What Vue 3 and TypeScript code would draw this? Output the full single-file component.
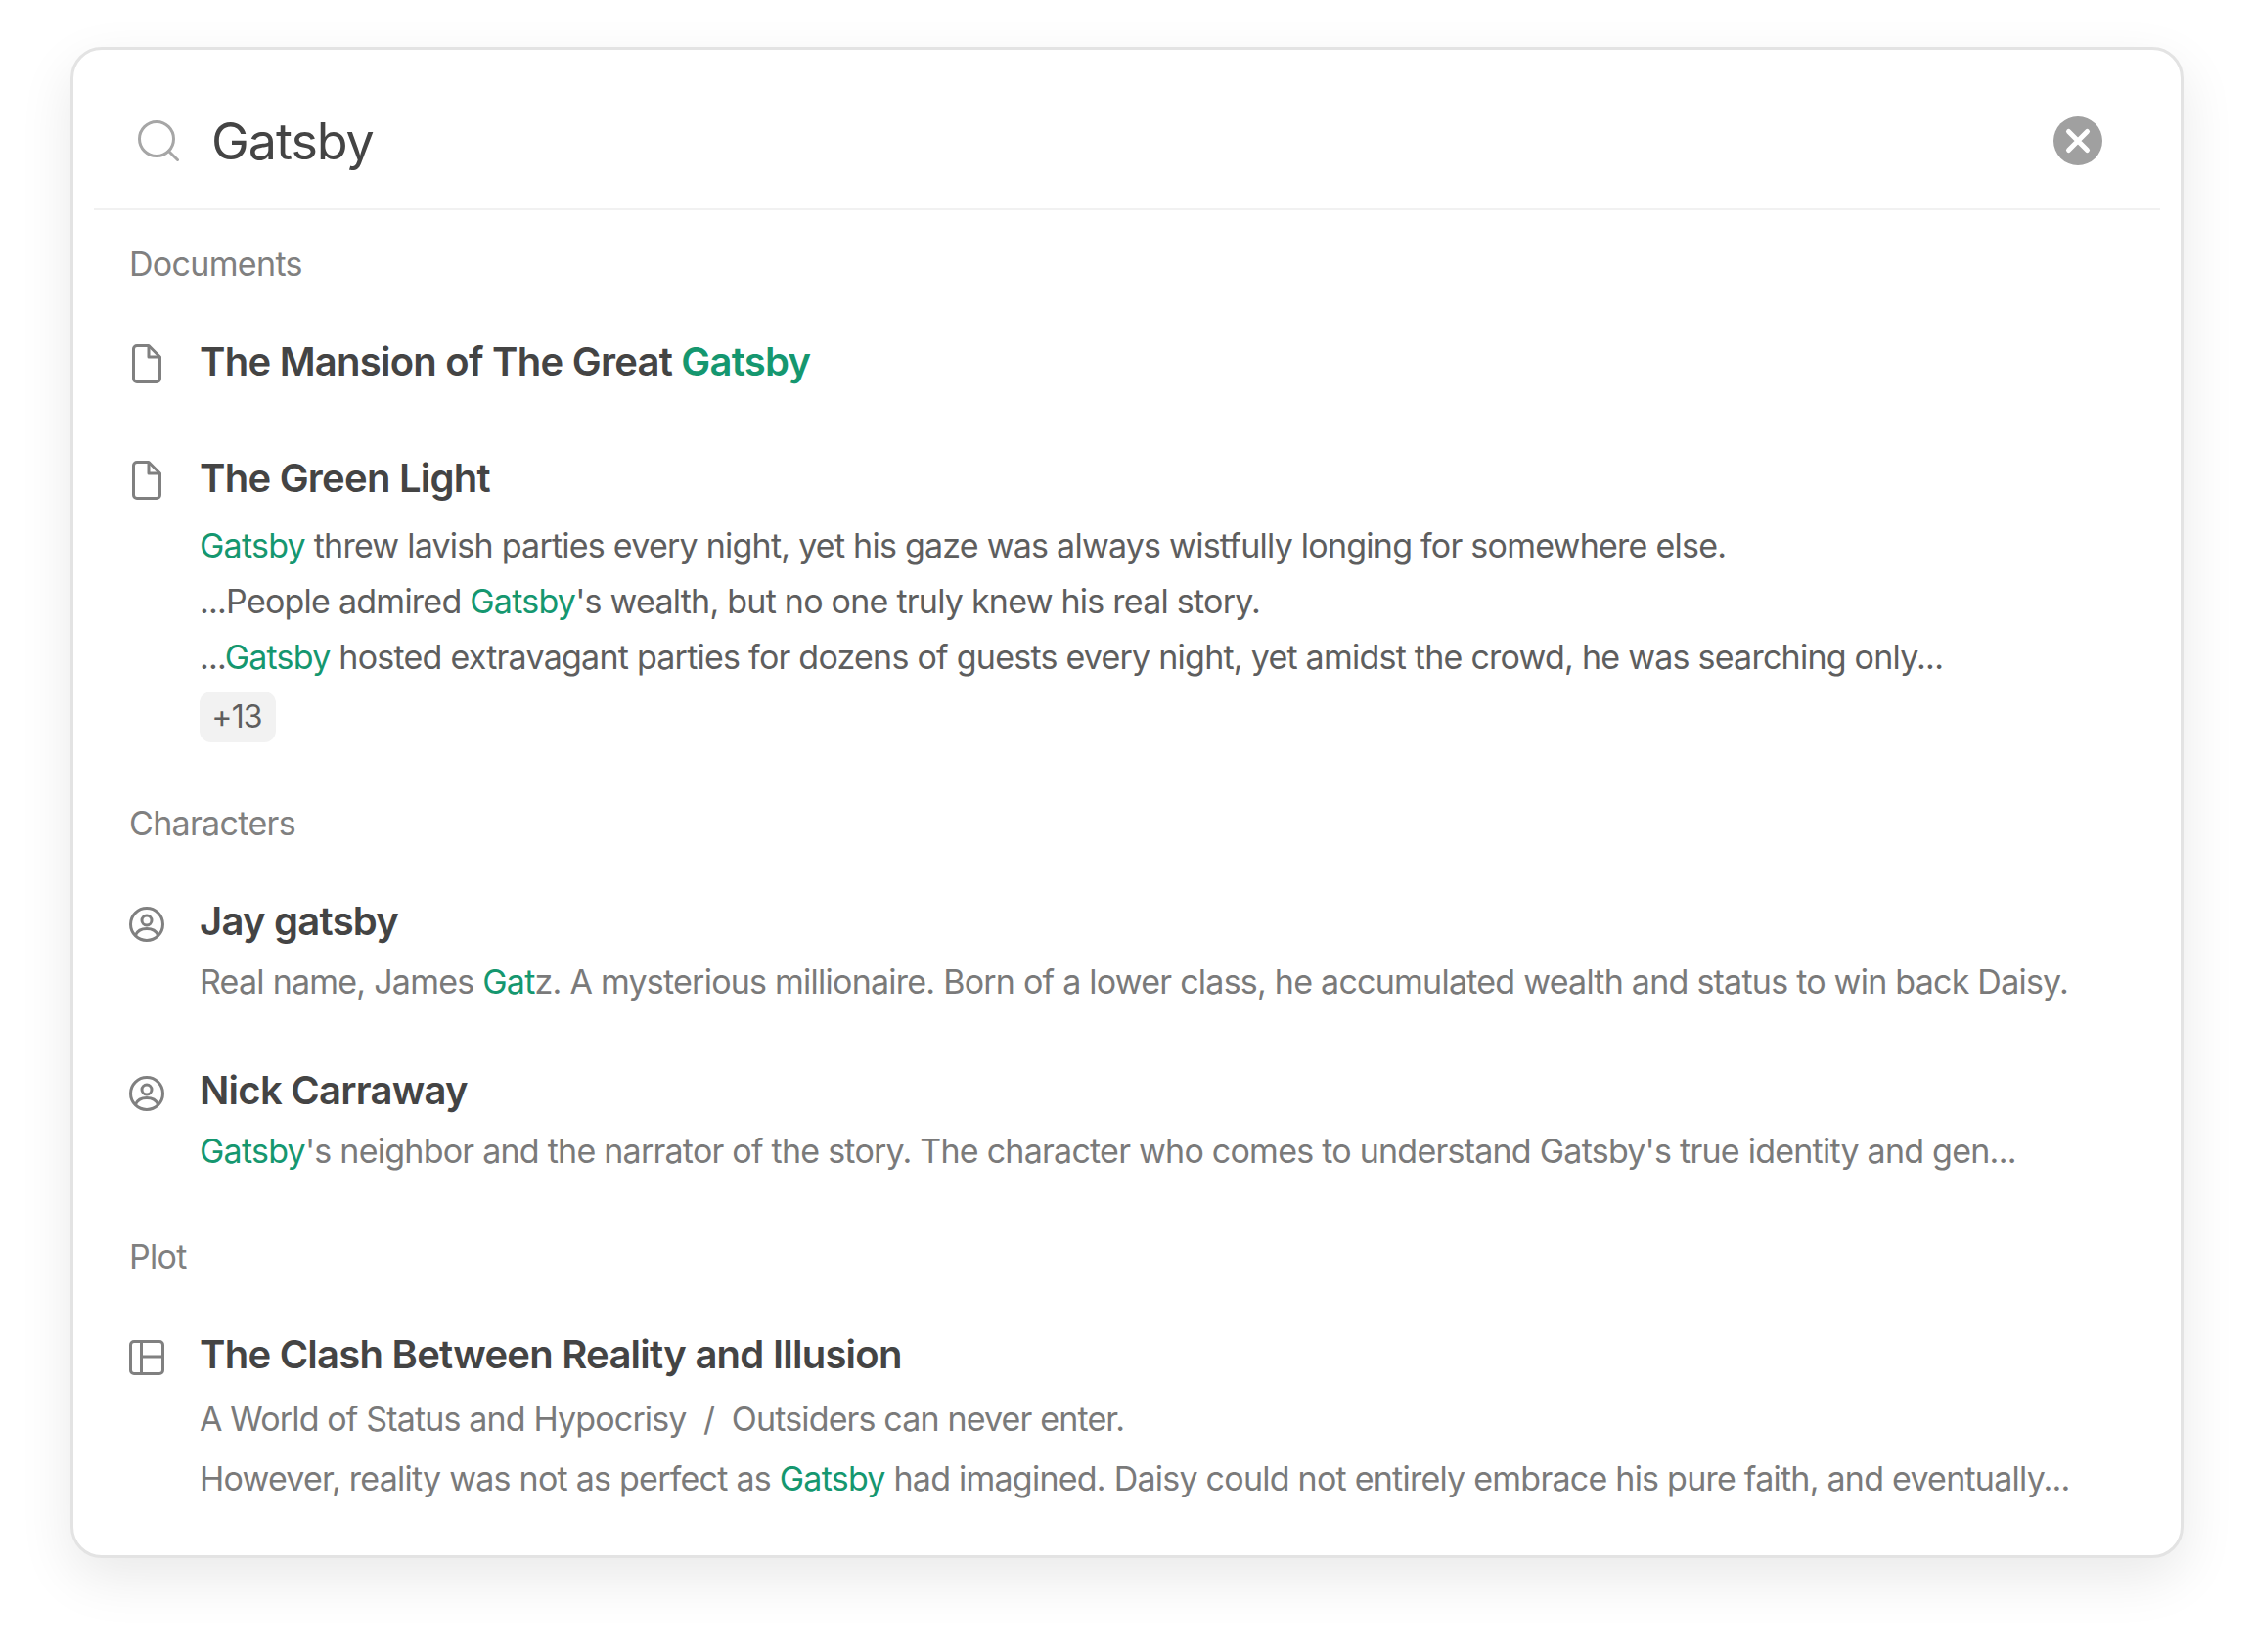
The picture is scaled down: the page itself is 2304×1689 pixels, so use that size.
<script setup lang="ts">
interface Item {
  icon: 'doc' | 'person' | 'plot'
  title: string
  lines: string[]
  more?: string
  dark?: boolean
  sub?: string
}
interface Section {
  label: string
  items: Item[]
}

// [..] marks the matched part of a line
const sections: Section[] = [
  {
    label: 'Documents',
    items: [
      { icon: 'doc', title: 'The Mansion of The Great [Gatsby]', lines: [] },
      {
        icon: 'doc',
        title: 'The Green Light',
        dark: true,
        lines: [
          '[Gatsby] threw lavish parties every night, yet his gaze was always wistfully longing for somewhere else.',
          "...People admired [Gatsby]'s wealth, but no one truly knew his real story.",
          '...[Gatsby] hosted extravagant parties for dozens of guests every night, yet amidst the crowd, he was searching only...',
        ],
        more: '+13',
      },
    ],
  },
  {
    label: 'Characters',
    items: [
      {
        icon: 'person',
        title: 'Jay gatsby',
        lines: ['Real name, James [Gat]z. A mysterious millionaire. Born of a lower class, he accumulated wealth and status to win back Daisy.'],
      },
      {
        icon: 'person',
        title: 'Nick Carraway',
        lines: ["[Gatsby]'s neighbor and the narrator of the story. The character who comes to understand Gatsby's true identity and gen..."],
      },
    ],
  },
  {
    label: 'Plot',
    items: [
      {
        icon: 'plot',
        title: 'The Clash Between Reality and Illusion',
        sub: 'A World of Status and Hypocrisy  /  Outsiders can never enter.',
        lines: ['However, reality was not as perfect as [Gatsby] had imagined. Daisy could not entirely embrace his pure faith, and eventually...'],
      },
    ],
  },
]

const parts = (s: string) =>
  s.split(/(\[[^\]]+\])/).filter(Boolean).map((p) =>
    p[0] === '[' ? { text: p.slice(1, -1), hit: true } : { text: p, hit: false },
  )
</script>

<template>
  <div class="page">
    <div class="card">
      <div class="search">
        <svg width="42" height="42" viewBox="0 0 42 42" fill="none" stroke="#a6a6a6" stroke-width="3">
          <circle cx="19" cy="19" r="17.5" />
          <path d="M31.5 31.5 40.5 40.5" stroke-linecap="round" />
        </svg>
        <span class="query">Gatsby</span>
        <svg class="clear" width="50" height="50" viewBox="0 0 50 50">
          <circle cx="25" cy="25" r="25" fill="#a0a0a0" />
          <path d="M15.5 15.5 34.5 34.5M34.5 15.5 15.5 34.5" stroke="#fff" stroke-width="5" stroke-linecap="round" />
        </svg>
      </div>
      <div class="divider"></div>

      <section v-for="sec in sections" :key="sec.label" class="section">
        <div class="label">{{ sec.label }}</div>
        <div class="items">
          <div v-for="item in sec.items" :key="item.title" class="item" :class="{ bare: !item.lines.length }">
            <svg class="icon" :class="item.icon" width="36" height="40" viewBox="0 0 36 40" fill="none" stroke="#808080" stroke-width="3" stroke-linejoin="round">
              <template v-if="item.icon === 'doc'">
                <path d="M8 1.500H20L31.500 13V35a3.500 3.500 0 0 1-3.500 3.500H8A3.500 3.500 0 0 1 4.500 35V5A3.500 3.500 0 0 1 8 1.500Z" />
                <path d="M20 1.500V13H31.500" />
              </template>
              <template v-else-if="item.icon === 'person'">
                <circle cx="18" cy="18" r="16.500" />
                <circle cx="18" cy="14" r="5" />
                <path d="M6.500 29C8.500 24.500 13 22.500 18 22.500S27.500 24.500 29.500 29" />
              </template>
              <template v-else>
                <rect x="1.500" y="1.500" width="33" height="33" rx="3.500" />
                <path d="M12.500 1.500V34.500M12.500 17H34.500" />
              </template>
            </svg>
            <div class="body">
              <div class="title">
                <span v-for="(p, i) in parts(item.title)" :key="i" :class="{ hit: p.hit }">{{ p.text }}</span>
              </div>
              <div v-if="item.sub" class="line sub">{{ item.sub }}</div>
              <div v-for="(line, n) in item.lines" :key="n" class="line" :class="{ dark: item.dark, first: item.dark && n === 0, tail: item.sub }">
                <span v-for="(p, i) in parts(line)" :key="i" :class="{ hit: p.hit }">{{ p.text }}</span>
              </div>
              <span v-if="item.more" class="more">{{ item.more }}</span>
            </div>
          </div>
        </div>
      </section>
    </div>
  </div>
</template>

<style scoped>
.page {
  padding: 48px 72px 96px;
  font-family: Inter, "Liberation Sans", sans-serif;
  background: #fff;
}

.card {
  width: 2160px;
  height: 1545px;
  box-sizing: border-box;
  border: 3px solid #e3e3e3;
  border-radius: 32px;
  background: #fff;
  box-shadow: 0 20px 56px rgba(0, 0, 0, 0.09);
}

.search {
  height: 162px;
  box-sizing: border-box;
  padding: 24px 80px 0 66px;
  display: flex;
  align-items: center;
}

.query {
  margin-left: 33px;
  font-size: 52px;
  color: #444;
  letter-spacing: -1.04px;
}

.clear {
  margin-left: auto;
}

.divider {
  height: 2px;
  margin: 0 21px;
  background: #f1f1f1;
}

.section {
  padding: 0 57px;
}

.label {
  margin-top: 31px;
  line-height: 48px;
  font-size: 34px;
  color: #808080;
  letter-spacing: -0.68px;
}

.section + .section .label {
  margin-top: 56px;
}

.items {
  margin-top: 48px;
  display: flex;
  flex-direction: column;
  gap: 55px;
}

.item {
  display: flex;
  gap: 36px;
}

.item.bare {
  margin-bottom: 8px;
}

.icon {
  flex: none;
  margin-top: 10px;
}

.icon.person {
  margin-top: 13px;
}

.icon.plot {
  margin-top: 13px;
}

.body {
  flex: 1;
  min-width: 0;
}

.title {
  line-height: 56px;
  font-size: 40px;
  font-weight: 600;
  color: #444;
  letter-spacing: -0.75px;
}

.hit {
  color: #15976f;
}

.line {
  margin-top: 5px;
  line-height: 57px;
  font-size: 34px;
  color: #7a7a7a;
  letter-spacing: -0.76px;
  white-space: pre;
}

.line + .line {
  margin-top: 0;
}

.dark {
  color: #5e5e5e;
}

.line.first {
  margin-top: 12px;
}

.line.sub {
  margin-top: 9px;
  letter-spacing: -0.85px;
}

.line.tail {
  margin-top: 4px;
}

.more {
  display: block;
  width: 78px;
  box-sizing: border-box;
  padding-right: 2px;
  margin: 7px 0 3px;
  height: 52px;
  line-height: 52px;
  text-align: center;
  font-size: 32px;
  letter-spacing: -0.9px;
  color: #5e5e5e;
  background: #f2f2f2;
  border-radius: 12px;
}
</style>
